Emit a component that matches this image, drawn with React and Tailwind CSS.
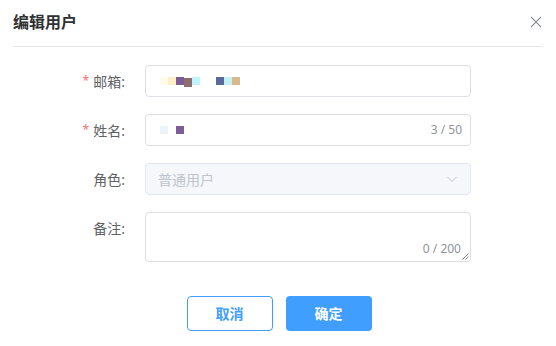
import React from "react";

const font = { fontFamily: '"Noto Sans", "Noto Sans CJK SC", sans-serif' };

const Blob = ({ c, tall }) => (
  <span className={`inline-block w-2 ${tall ? "h-[9px] translate-y-[1px]" : "h-2"} blur-[0.4px]`} style={{ background: c }} />
);

const Label = ({ children, required }) => (
  <div className="w-[145px] shrink-0 pr-5 flex justify-end items-center h-8 text-[14px] text-[#606266]">
    {required && <span className="text-[#f56c6c] mr-1 text-[12px]">*</span>}
    <span>{children}:</span>
  </div>
);

export default function App() {
  return (
    <div className="w-[556px] h-[346px] bg-white" style={font}>
      <div className="flex items-center justify-between pt-[12px] pb-[14px] border-b border-[#e4e7ed] mx-[13px]">
        <span className="text-[16px] font-bold text-[#303133] leading-5">编辑用户</span>
        <svg width="12" height="12" viewBox="0 0 12 12" className="mr-[1px]">
          <path d="M1 1L11 11M11 1L1 11" stroke="#909399" strokeWidth="1.1" />
        </svg>
      </div>

      <div className="pt-[18px]">
        <div className="flex mb-[17px]">
          <Label required>邮箱</Label>
          <div className="w-[326px] h-8 border border-[#dcdfe6] rounded flex items-center pl-[14px]">
            <Blob c="#fffbea" />
            <Blob c="#fdf0c8" />
            <Blob c="#7b5c96" />
            <Blob c="#8d6d6e" tall />
            <Blob c="#c0f4fc" />
            <span className="w-4" />
            <Blob c="#5a6a9c" />
            <Blob c="#c7f0fa" />
            <Blob c="#d8b98a" />
          </div>
        </div>

        <div className="flex mb-[17px]">
          <Label required>姓名</Label>
          <div className="w-[326px] h-8 border border-[#dcdfe6] rounded flex items-center pl-[14px] pr-[8px]">
            <Blob c="#eef3f9" />
            <span className="w-2" />
            <Blob c="#7d5c98" />
            <span className="ml-auto text-[12px] text-[#909399]">3 / 50</span>
          </div>
        </div>

        <div className="flex mb-[17px]">
          <Label>角色</Label>
          <div className="w-[326px] h-8 border border-[#e4e7ed] bg-[#f5f7fa] rounded flex items-center pl-[12px] pr-[12px]">
            <span className="text-[14px] text-[#c0c4cc]">普通用户</span>
            <svg width="12" height="12" viewBox="0 0 12 12" className="ml-auto">
              <path d="M1.5 4L6 8.5L10.5 4" stroke="#c0c4cc" strokeWidth="1" fill="none" />
            </svg>
          </div>
        </div>

        <div className="flex">
          <Label>备注</Label>
          <div className="relative w-[326px] h-[50px] border border-[#dcdfe6] rounded">
            <span className="absolute right-[9px] bottom-[3px] text-[12px] text-[#909399]">0 / 200</span>
            <svg width="7" height="7" viewBox="0 0 7 7" className="absolute right-[1px] bottom-[1px]">
              <path d="M6.5 0.5L0.5 6.5M6.5 3.5L3.5 6.5" stroke="#606266" strokeWidth="0.8" />
            </svg>
          </div>
        </div>

        <div className="flex justify-center gap-[13px] mt-[34px] pl-[2px]">
          <button className="w-[86px] h-[35px] rounded border border-[#409eff] text-[#409eff] text-[14px] font-bold bg-white">
            取消
          </button>
          <button className="w-[86px] h-[35px] rounded bg-[#409eff] text-white text-[14px] font-bold">
            确定
          </button>
        </div>
      </div>
    </div>
  );
}
